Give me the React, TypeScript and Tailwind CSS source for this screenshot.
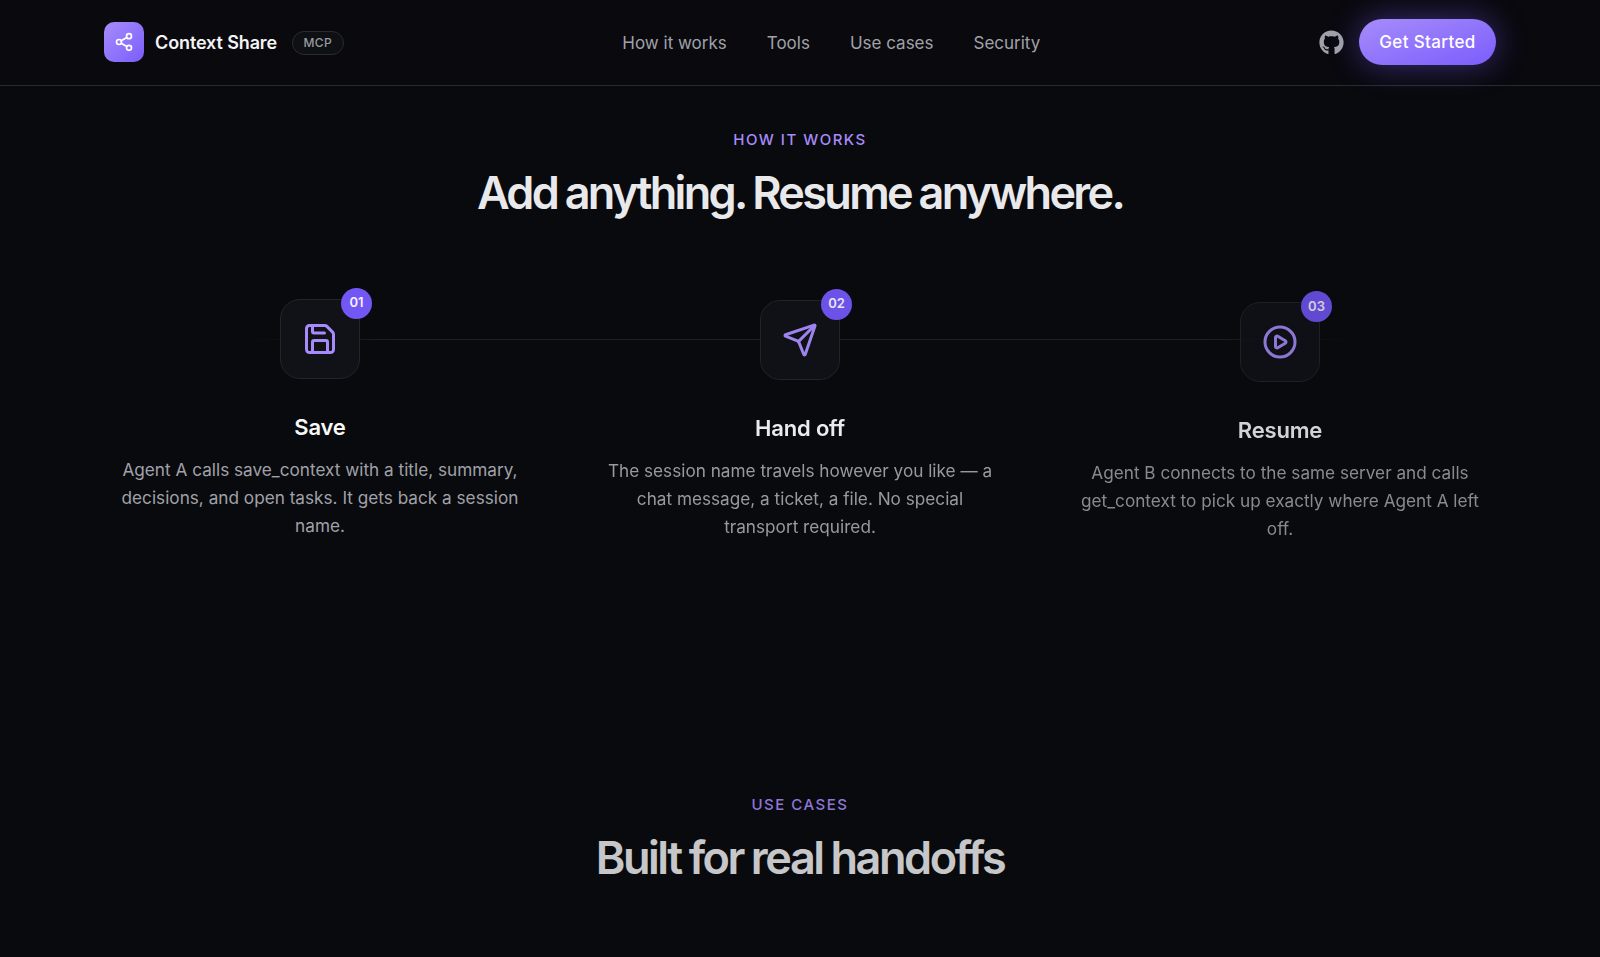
import { Share2, Save, Send, CirclePlay } from "lucide-react";
import { FaGithub } from "react-icons/fa";

const font = "font-['Inter',sans-serif]";

const steps = [
  {
    n: "01",
    title: "Save",
    Icon: Save,
    text: "Agent A calls save_context with a title, summary, decisions, and open tasks. It gets back a session name.",
    cls: "mt-0 opacity-100",
  },
  {
    n: "02",
    title: "Hand off",
    Icon: Send,
    text: "The session name travels however you like — a chat message, a ticket, a file. No special transport required.",
    cls: "mt-[1px] opacity-95",
  },
  {
    n: "03",
    title: "Resume",
    Icon: CirclePlay,
    text: "Agent B connects to the same server and calls get_context to pick up exactly where Agent A left off.",
    cls: "mt-[3.5px] opacity-85",
  },
];

export default function App() {
  return (
    <div className={`${font} h-[957px] overflow-hidden bg-[#080a0d] antialiased`}>
      <header className="h-[86px] border-b border-[#2a2b30] bg-[#09090e]">
        <div className="flex h-[85px] items-center justify-between px-[104px]">
          <div className="flex items-center">
            <div className="mb-px flex h-10 w-10 items-center justify-center rounded-[10px] bg-gradient-to-br from-[#a78bfa] to-[#7c5cfc] text-white">
              <Share2 size={20} strokeWidth={2} />
            </div>
            <span className="ml-[11px] text-lg font-semibold tracking-[-0.12px] text-[#f4f4f5]">Context Share</span>
            <span className="ml-[15px] rounded-full border border-[#2a2b31] bg-[#0f1014] px-[10.5px] py-[3px] text-xs font-medium tracking-[0.4px] text-[#9a9aa2]">
              MCP
            </span>
          </div>
          <nav className="flex items-center gap-10 pt-[2px] text-[17px] text-[#a1a1aa]">
            <span>How it works</span>
            <span>Tools</span>
            <span>Use cases</span>
            <span>Security</span>
          </nav>
          <div className="flex items-center gap-[15px]">
            <FaGithub size={25} className="text-[#a1a1aa]" />
            <div className="flex h-[46px] w-[137px] -translate-y-px items-center justify-center rounded-full bg-gradient-to-br from-[#a78bfa] to-[#7c5cfc] pt-[2px] text-[17px] font-medium tracking-[0.35px] text-white shadow-[0_0_32px_rgba(124,92,252,0.45)]">
              Get Started
            </div>
          </div>
        </div>
      </header>

      <section className="pt-[44px] text-center">
        <p className="text-[15px] font-medium leading-5 tracking-[1.5px] text-[#a78bfa]">HOW IT WORKS</p>
        <h2 className="mt-[15px] text-[45px] font-semibold leading-[56px] tracking-[-2.7px] [word-spacing:-1px] text-[#e9e9eb]">
          Add anything. Resume anywhere.
        </h2>

        <div className="relative mx-auto mt-[77.5px] grid w-[1360px] grid-cols-3 items-start gap-20">
          <div className="absolute left-[125px] right-[125px] top-[40px] h-px bg-[linear-gradient(90deg,transparent,#1f2025_14%,#1f2025_86%,transparent)]" />
          {steps.map(({ n, title, Icon, text, cls }) => (
            <div key={n} className={`relative flex flex-col items-center ${cls}`}>
              <div className="relative flex h-20 w-20 items-center justify-center rounded-[20px] border border-[#24252a] bg-[#111218] text-[#a78bfa]">
                <Icon size={36} strokeWidth={2} />
                <span className="absolute -right-[13px] -top-[12px] flex h-[31px] w-[31px] items-center justify-center rounded-full bg-[#7257f5] text-[13px] font-semibold text-[#f4f2ff]">
                  {n}
                </span>
              </div>
              <h3 className="mt-[32px] text-[22px] font-semibold leading-8 tracking-[-0.2px] text-[#f8f8f9]">{title}</h3>
              <p className="mt-[13px] w-[401px] text-[17.2px] leading-[28px] text-[#a1a1aa]">{text}</p>
            </div>
          ))}
        </div>
      </section>

      <section className="pt-[252px] text-center opacity-85">
        <p className="text-[15px] font-medium leading-5 tracking-[1.5px] text-[#a78bfa]">USE CASES</p>
        <h2 className="mt-[15px] text-[45px] font-semibold leading-[56px] tracking-[-2.45px] [word-spacing:-1px] text-[#e9e9eb]">
          Built for real handoffs
        </h2>
      </section>
    </div>
  );
}
